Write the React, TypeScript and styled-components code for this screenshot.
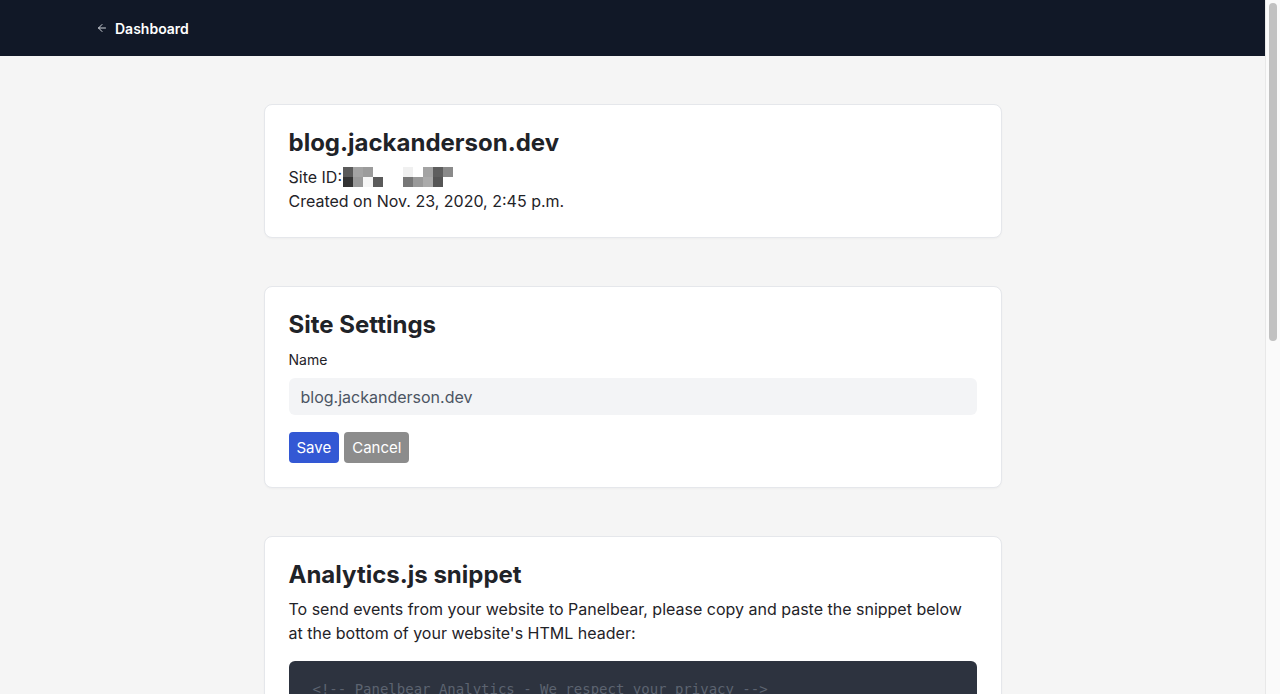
import React from 'react'
import styled, { createGlobalStyle } from 'styled-components'
import { ArrowLeft } from 'lucide-react'

const GlobalStyle = createGlobalStyle`
  html, body {
    margin: 0;
    padding: 0;
    height: 100%;
    overflow: hidden;
    background: #f5f5f5;
    font-family: Inter, "Noto Sans", sans-serif;
    color: #1f2328;
  }
  * { box-sizing: border-box; }
`

const Shell = styled.div`
  display: flex;
  height: 100vh;
`

const Page = styled.div`
  flex: 1;
  min-width: 0;
  overflow-y: auto;
  background: #f5f5f5;
`

const ScrollRail = styled.div`
  width: 15px;
  flex-shrink: 0;
  background: #fafafa;
  border-left: 1px solid #e8e8e8;
  padding: 3px 3px 0 3px;
`

const ScrollThumb = styled.div`
  height: 338px;
  border-radius: 4px;
  background: #c1c1c1;
`

const TopBar = styled.header`
  height: 56px;
  background: #111827;
  display: flex;
  align-items: center;
  padding: 0 96px;
`

const BackLink = styled.a`
  display: flex;
  align-items: center;
  gap: 7px;
  color: #ffffff;
  font-size: 14px;
  font-weight: 600;
  text-decoration: none;
  cursor: pointer;

  svg {
    color: #d1d5db;
  }
`

const Main = styled.main`
  max-width: 738px;
  margin: 0 auto;
  padding: 48px 0 300px;
  display: flex;
  flex-direction: column;
  gap: 48px;
`

const Card = styled.section`
  background: #ffffff;
  border: 1px solid #e5e7eb;
  border-radius: 8px;
  box-shadow: 0 1px 2px rgba(0, 0, 0, 0.03);
  padding: 24px;
`

const Title = styled.h2`
  margin: 0 0 8px;
  font-size: 24px;
  line-height: 28px;
  font-weight: 700;
  color: #1f2328;
`

const Line = styled.p`
  margin: 0;
  font-size: 16px;
  line-height: 24px;
  color: #1f2328;
  display: flex;
  align-items: center;
`

const Redacted = styled.span`
  display: inline-grid;
  grid-template-columns: repeat(11, 10px);
  grid-template-rows: repeat(2, 10px);
  margin-left: 1px;
`

const Cell = styled.span<{ $c: string }>`
  background: ${(p) => p.$c};
`

const Label = styled.label`
  display: block;
  margin-top: 11px;
  font-size: 14px;
  line-height: 20px;
  font-weight: 400;
  color: #1f2328;
`

const Input = styled.input`
  display: block;
  width: 100%;
  height: 37px;
  margin-top: 8px;
  border: none;
  border-radius: 6px;
  background: #f3f4f6;
  padding: 0 12px;
  font-family: Inter, sans-serif;
  font-size: 16px;
  color: #4b5563;
  outline: none;
`

const Actions = styled.div`
  display: flex;
  gap: 5px;
  margin-top: 17px;
`

const Button = styled.button<{ $variant: 'primary' | 'secondary' }>`
  height: 31px;
  padding: 0 8px;
  border: none;
  border-radius: 4px;
  font-family: Inter, sans-serif;
  font-size: 15px;
  color: #ffffff;
  background: ${(p) => (p.$variant === 'primary' ? '#3358d4' : '#8c8c8c')};
  cursor: pointer;
`

const Paragraph = styled.p`
  margin: 0;
  font-size: 16px;
  line-height: 24px;
  color: #1f2328;
`

const Code = styled.pre`
  margin: 16px 0 0;
  background: #2d333f;
  border-radius: 6px;
  padding: 18px 24px;
  font-family: "DejaVu Sans Mono", monospace;
  font-size: 14px;
  line-height: 20px;
  color: #5c6370;
  overflow-x: auto;
`

const DangerButton = styled.button`
  margin-top: 16px;
  height: 31px;
  padding: 0 8px;
  border: none;
  border-radius: 4px;
  font-family: Inter, sans-serif;
  font-size: 15px;
  color: #ffffff;
  background: #dc2626;
`

const pixels = [
  ['#5b5b5b', '#a3a3a3', '#9b9b9b', '#ffffff', '#ffffff', '#ffffff', '#f0f0f0', '#ffffff', '#a3a3a3', '#5e5e5e', '#8a8a8a'],
  ['#333333', '#999999', '#f5f5f5', '#5a5a5a', '#ffffff', '#ffffff', '#777777', '#999999', '#aaaaaa', '#555555', '#ffffff'],
]

const snippet = `<!-- Panelbear Analytics - We respect your privacy -->
<script async src="https://cdn.panelbear.com/analytics.js?site=XXXXXXXX"></script>
<script>
    window.panelbear = window.panelbear || function() {
        (window.panelbear.q = window.panelbear.q || []).push(arguments);
    };
    panelbear('config', { site: 'XXXXXXXX' });
</script>`

export default function App() {
  return (
    <Shell>
      <GlobalStyle />
      <Page>
        <TopBar>
          <BackLink>
            <ArrowLeft size={12} strokeWidth={2} />
            Dashboard
          </BackLink>
        </TopBar>
        <Main>
          <Card>
            <Title>blog.jackanderson.dev</Title>
            <Line>
              Site ID:
              <Redacted>
                {pixels.flat().map((c, i) => (
                  <Cell key={i} $c={c} />
                ))}
              </Redacted>
            </Line>
            <Line>Created on Nov. 23, 2020, 2:45 p.m.</Line>
          </Card>

          <Card>
            <Title>Site Settings</Title>
            <Label htmlFor="name">Name</Label>
            <Input id="name" defaultValue="blog.jackanderson.dev" />
            <Actions>
              <Button $variant="primary">Save</Button>
              <Button $variant="secondary">Cancel</Button>
            </Actions>
          </Card>

          <Card>
            <Title>Analytics.js snippet</Title>
            <Paragraph>
              To send events from your website to Panelbear, please copy and paste the snippet below
              at the bottom of your website's HTML header:
            </Paragraph>
            <Code>{snippet}</Code>
          </Card>

          <Card>
            <Title>Danger Zone</Title>
            <Paragraph>
              Deleting this site will permanently remove all of its analytics data. This action cannot be undone.
            </Paragraph>
            <DangerButton>Delete site</DangerButton>
          </Card>
        </Main>
      </Page>
      <ScrollRail>
        <ScrollThumb />
      </ScrollRail>
    </Shell>
  )
}
